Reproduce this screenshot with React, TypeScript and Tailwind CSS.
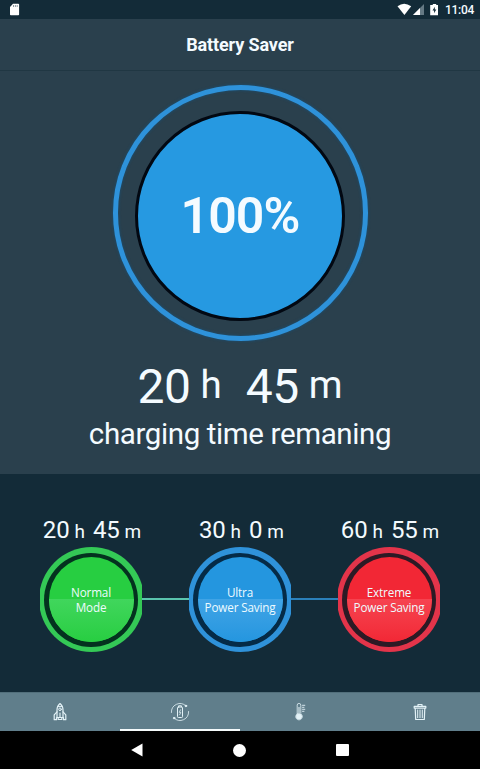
import type { ReactNode } from 'react';

type Mode = {
  hours: number;
  minutes: number;
  lines: string[];
  ring: string;
  fill: string;
  gap: string;
  shine: string;
  offset: string;
};

const modes: Mode[] = [
  { hours: 20, minutes: 45, lines: ['Normal', 'Mode'], ring: 'bg-[#34c956]', fill: 'bg-[#27ce41]', gap: 'bg-[#04321f]', shine: 'from-[#40d65c] to-[#27ce41]', offset: 'pl-[2px]' },
  { hours: 30, minutes: 0, lines: ['Ultra', 'Power Saving'], ring: 'bg-[#2f92da]', fill: 'bg-[#2496df]', gap: 'bg-[#052b47]', shine: 'from-[#40a4e6] to-[#2496df]', offset: 'pl-[3px]' },
  { hours: 60, minutes: 55, lines: ['Extreme', 'Power Saving'], ring: 'bg-[#e3344a]', fill: 'bg-[#f22735]', gap: 'bg-[#2c1a25]', shine: 'from-[#f64350] to-[#f22735]', offset: 'pl-[2px]' },
];

function StatusBar() {
  return (
    <div className="flex h-[19px] shrink-0 items-center justify-between bg-[#132b38] pl-[9px] pr-[6px]">
      <svg className="h-[13px] w-[11px]" viewBox="0 0 11 13">
        <path d="M4 .8h5.3q.8 0 .8.8v9.8q0 .8-.8.8H1.8q-.8 0-.8-.8V4z" fill="#fff" />
        <path d="M4.5 2v2M6.4 2v2M8.2 2v2" stroke="#718089" strokeWidth=".8" />
      </svg>
      <div className="flex items-center">
        <svg className="h-[13px] w-[45px]" viewBox="0 0 45 13">
          <path d="M.5 3.2Q7-1.8 14.2 3.2L7.4 12z" fill="#fff" />
          <path d="M27 1v11H16z" fill="#657984" />
          <path d="M23 5v7H16z" fill="#fff" />
          <path d="M35.8 1h3.4v1h1.8v10.2h-7.8V2h2.6z" fill="#fff" />
          <path d="M37.8 3.8 35.5 7.4h1.6v2.9l2.2-3.8h-1.5z" fill="#132b38" />
        </svg>
        <span className="ml-[3px] mt-px text-[12px] font-medium leading-[18px] tracking-[-0.3px]">11:04</span>
      </div>
    </div>
  );
}

function Header() {
  return (
    <header className="flex h-[52px] shrink-0 items-center justify-center border-b border-[#203743]">
      <h1 className="text-[18px] font-bold leading-[54px] tracking-[-0.12px]">Battery Saver</h1>
    </header>
  );
}

function Gauge() {
  return (
    <div className="mt-[14px] flex h-[256px] w-[255px] shrink-0 items-center justify-center rounded-full border-[5px] border-[#2e92da] shadow-[0_0_3px_#16527b,inset_0_0_3px_#16527b]">
      <div className="mt-[5px] flex h-[210px] w-[210px] shrink-0 items-center justify-center rounded-full border-[3.5px] border-[#020812] bg-[#2699e1]">
        <span className="mt-px text-[50px] font-semibold leading-none tracking-[-0.9px]">100%</span>
      </div>
    </div>
  );
}

function Remaining() {
  return (
    <div className="mt-[17px] flex flex-col items-center">
      <div className="flex h-[57px] items-start leading-[58px]">
        <span className="text-[48px] tracking-[-0.5px]">20</span>
        <span className="ml-[10px] text-[38.5px] leading-[54px]">h</span>
        <span className="ml-[24px] text-[48px] tracking-[-0.5px]">45</span>
        <span className="ml-[10px] text-[38.5px] leading-[54px]">m</span>
      </div>
      <p className="text-[29.5px] leading-[38px] tracking-[-0.38px]">charging time remaning</p>
    </div>
  );
}

function ModeDial({ hours, minutes, lines, ring, fill, gap, shine, offset }: Mode) {
  return (
    <div className="flex w-[102px] shrink-0 flex-col items-center">
      <div className={`flex h-[31px] items-baseline whitespace-nowrap leading-[33px] ${offset}`}>
        <span className="text-[24px] tracking-[-0.2px]">{hours}</span>
        <span className="ml-[5px] text-[19px]">h</span>
        <span className="ml-[8px] text-[24px] tracking-[-0.2px]">{minutes}</span>
        <span className="ml-[5px] text-[19px]">m</span>
      </div>
      {/* the ring is wider than its column, so both sides end flat */}
      <div className="mt-[2px] flex h-[105px] w-full justify-center overflow-hidden">
        <div className={`flex h-[105px] w-[105px] shrink-0 items-center justify-center rounded-full ${ring}`}>
          <div className={`flex h-[94px] w-[94px] items-center justify-center rounded-full ${gap}`}>
            <div className={`relative h-[85px] w-[85px] overflow-hidden rounded-full ${fill}`}>
              <div className={`absolute inset-x-0 bottom-0 h-[43px] bg-linear-to-b ${shine}`} />
              <div className="relative flex h-full flex-col items-center justify-center whitespace-nowrap pt-px font-['Open_Sans','Noto_Sans',sans-serif] text-[11.7px] leading-[15px] tracking-[-0.15px] text-[#eefbff]">
                {lines.map((line) => (
                  <span key={line}>{line}</span>
                ))}
              </div>
            </div>
          </div>
        </div>
      </div>
    </div>
  );
}

function TabIcon({ children }: { children: ReactNode }) {
  return (
    <svg className="h-[20px] w-[20px]" viewBox="0 0 20 20" fill="none" stroke="#e3f2f7" strokeWidth="1" strokeLinejoin="round" strokeLinecap="round">
      {children}
    </svg>
  );
}

const tabs = [
  {
    id: 'boost',
    icon: (
      <>
        <path d="M10 1.5C7.8 3.3 7 5.6 7 8v7.5h6V8c0-2.4-.8-4.7-3-6.5z" strokeWidth="1.2" />
        <path d="M8 4.6h4" />
        <circle cx="10" cy="7.3" r="1.3" />
        <path d="M7 9.8 4.2 12.9v4.8h2.3v-2.2M13 9.8l2.8 3.1v4.8h-2.3v-2.2M8.2 15.5v2h3.6v-2M10 11v4" strokeWidth="1.2" />
      </>
    ),
  },
  {
    id: 'battery',
    icon: (
      <>
        <path d="M8.6 5V3.8h2.8V5M8.3 5h3.4q.8 0 .8.8v8.9q0 .8-.8.8H8.3q-.8 0-.8-.8V5.8q0-.8.8-.8z" />
        <path d="M10.5 7.8 9.3 10.4h1.5l-1.2 2.4" strokeWidth=".8" />
        <path d="M1.4 10.5A8.6 8.6 0 0 1 15.8 3.8M18.6 9.5A8.6 8.6 0 0 1 4.2 16.2" strokeWidth=".8" />
        <circle cx="15.9" cy="3.9" r=".8" fill="#e3f2f7" />
        <circle cx="4.1" cy="16.1" r=".8" fill="#e3f2f7" />
      </>
    ),
  },
  {
    id: 'temperature',
    icon: (
      <>
        <path d="M7.2 11.8V3.2a1.8 1.8 0 0 1 3.6 0v8.6a3.3 3.3 0 1 1-3.6 0z" strokeWidth=".8" />
        <circle cx="9" cy="14.5" r="2.6" fill="#e3f2f7" />
        <path d="M9 14V5.5" strokeWidth="1.1" />
        <path d="M12.5 3.3h2.3M12.5 5.3h1.5M12.5 7.3h2.3M12.5 9.3h1.5" strokeWidth=".9" />
      </>
    ),
  },
  {
    id: 'clean',
    icon: (
      <>
        <path d="M4.2 4.3h11.6v1.8H4.2zM8 4.2V2.5h4v1.7M5.2 6.2l.5 11.3h8.6l.5-11.3" strokeWidth="1.2" />
        <path d="M7.7 8v7.7M10 8v7.7M12.3 8v7.7" />
      </>
    ),
  },
];

function TabBar({ active }: { active: string }) {
  return (
    <nav className="grid h-[39px] shrink-0 grid-cols-4 border-t border-[#526f7b] bg-[#607e8b]">
      {tabs.map(({ id, icon }) => (
        <button
          key={id}
          aria-label={id}
          className={`flex justify-center border-b-2 pt-[8.5px] ${id === active ? 'border-[#f5fafb]' : 'border-transparent'}`}
        >
          <TabIcon>{icon}</TabIcon>
        </button>
      ))}
    </nav>
  );
}

function SystemNav() {
  return (
    <div className="flex h-[38px] shrink-0 items-center justify-center gap-[90px] bg-black">
      <svg className="h-[14px] w-[12px]" viewBox="0 0 12 14" fill="#fff">
        <path d="M11.5.5v13L.2 7z" />
      </svg>
      <div className="h-[13px] w-[13px] rounded-full bg-white" />
      <div className="h-[12.5px] w-[12.5px] rounded-[1px] bg-white" />
    </div>
  );
}

export default function App() {
  return (
    <div className="flex h-[769px] w-[480px] flex-col overflow-hidden bg-[#132b38] font-[Roboto,sans-serif] text-[#f4fbff]">
      <StatusBar />
      <main className="flex h-[455px] shrink-0 flex-col bg-[#2a404d]">
        <Header />
        <div className="flex flex-col items-center">
          <Gauge />
          <Remaining />
        </div>
      </main>
      <section className="flex h-[218px] shrink-0 items-start justify-center pt-[40px]">
        <ModeDial {...modes[0]} />
        <div className="mt-[84px] h-[2px] w-[47px] bg-[#5ac4ad]" />
        <ModeDial {...modes[1]} />
        <div className="mt-[84px] h-[2px] w-[47px] bg-[#2b80ba]" />
        <ModeDial {...modes[2]} />
      </section>
      <TabBar active="battery" />
      <SystemNav />
    </div>
  );
}
